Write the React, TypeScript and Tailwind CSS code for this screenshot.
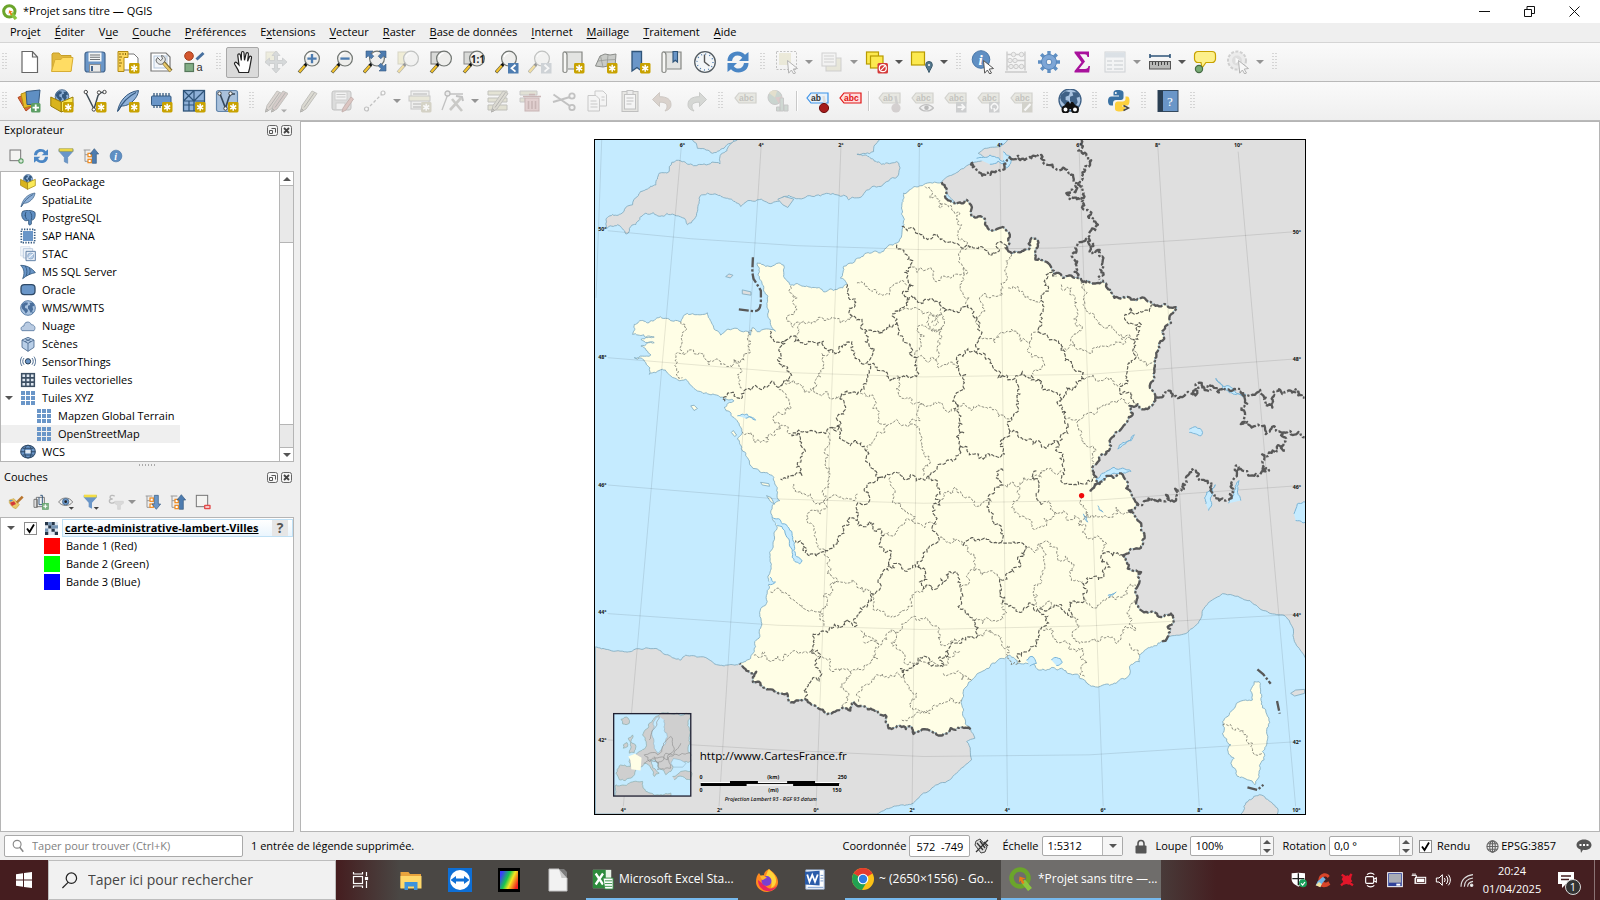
import React, { useState } from "react";
import type { ReactNode } from "react";

/* ------------------------------------------------------------------ */
/* Icon helpers                                                        */
/* ------------------------------------------------------------------ */

function Svg({ children, size = "size-6", box = "0 0 24 24" }: { children: ReactNode; size?: string; box?: string }) {
  return (
    <svg viewBox={box} className={`${size} shrink-0`} fill="none" aria-hidden="true">
      {children}
    </svg>
  );
}

function Star() {
  return (
    <g>
      <rect x="13" y="13" width="10.5" height="10.5" rx="1.4" fill="#c8a200" />
      <path d="M18.2 14.8v7M15.2 16.5l6 3.6M21.2 16.5l-6 3.6" stroke="#fff" strokeWidth="1.5" />
    </g>
  );
}

function Lens({ cx = 15, glass = "#eeeeec" }: { cx?: number; glass?: string }) {
  return (
    <g>
      <path d={`M${cx - 6.5} 15 L${cx - 13} 22.5`} stroke="#5b5b45" strokeWidth="3.4" />
      <path d={`M${cx - 7} 15.4 L${cx - 12.6} 22`} stroke="#f5c32c" strokeWidth="2" />
      <path d={`M${cx - 4.4} 12.5 L${cx - 7.2} 15.8`} stroke="#111" strokeWidth="3" />
      <circle cx={cx} cy="8.6" r="7.4" fill={glass} stroke="#6f7470" strokeWidth="1.2" />
      <path d={`M${cx - 5} 7a5.4 5.4 0 0 1 4.6-3.8`} stroke="#fff" strokeWidth="1.3" />
    </g>
  );
}

function Arrows() {
  return (
    <path
      d="M12 1l4 4.5h-2.5v5h5V8L23 12l-4.500 4v-2.500h-5v5H16L12 23l-4-4.500h2.500v-5h-5V16L1 12l4.500-4v2.500h5v-5H8z"
      fill="#a9b0b3"
      stroke="#8c9193"
      strokeWidth=".8"
    />
  );
}

function Cycle() {
  return (
    <g fill="#4a86c5">
      <path d="M1.500 11C1.500 5 6 1.500 11.500 1.500c3.500 0 6 1.300 7.500 3.200L22.500 2v9H13l3.300-3.200C15 6.200 13.600 5.500 11.800 5.500 8.500 5.500 6.500 7.500 6 11z" />
      <path d="M22.500 13c0 6-4.500 9.500-10 9.500-3.500 0-6-1.300-7.500-3.200L1.500 22v-9H11l-3.300 3.200c1.300 1.600 2.700 2.300 4.500 2.300 3.300 0 5.300-2 5.800-5.500z" />
    </g>
  );
}

function Globe({ cx = 12, cy = 12, r = 10, sea = "#b9cfe8", land = "#39597d" }: { cx?: number; cy?: number; r?: number; sea?: string; land?: string }) {
  return (
    <g transform={`translate(${cx} ${cy}) scale(${r / 10})`}>
      <circle r="10" fill={sea} stroke={land} strokeWidth="1.2" />
      <path
        d="M-8-5l4-3 4 1-1 3-3 1v3l3 1 1 3-3 4-2-4-3-3-1-3zM2-7l5 0 2 4-3 1 1 4-3 5-2-4-2-2 0-4 3-1zM5 5l2 0-1 2z"
        fill={land}
      />
    </g>
  );
}

function Tag({ fill = "#d3d3c4", stroke = "#9c9c90", text = "#77776c", label = "abc" }: { fill?: string; stroke?: string; text?: string; label?: string }) {
  return (
    <g>
      <path d="M6 4h17v10H6L2 9z" fill={fill} stroke={stroke} strokeWidth="1.200" />
      <text x="6" y="12" fontSize="8.500" fontWeight="700" fontFamily="Liberation Sans, sans-serif" fill={text}>
        {label}
      </text>
    </g>
  );
}

function Pencil({ color = "#b8b4a0" }: { color?: string }) {
  return (
    <g>
      <path d="M15 2l5 2.500L9 20l-5.500 3L5 16.500z" fill={color} stroke="#77756b" strokeWidth="1" />
      <path d="M17.500 3.500L7 18.500M4.500 19.500l-1 3.500 3-1.500z" stroke="#55534c" strokeWidth="1" />
    </g>
  );
}

const info = (
  <g>
    <circle cx="10" cy="9.500" r="8.800" fill="#5f8fc3" stroke="#4876a8" />
    <text x="7.500" y="15" fontSize="15" fontStyle="italic" fontWeight="700" fontFamily="Liberation Serif, serif" fill="#fff">
      i
    </text>
  </g>
);

const cursor = <path d="M12.500 10.500l10 8-4.300.6 2.300 3.900-1.800 1-2.300-4-2.700 3.200z" fill="#fff" stroke="#555" strokeWidth="1" />;

const mapSheet = (
  <g>
    <path d="M3 2h18v17H7" fill="#e3e4e2" stroke="#858783" strokeWidth="1.200" />
    <path d="M3 2c2.500 0 3 1.500 3 3v16c0 2-4 2-4 0V4c0-1 .3-2 1-2z" fill="#f7f7f5" stroke="#858783" strokeWidth="1.200" />
  </g>
);

const icons: Record<string, ReactNode> = {
  new: <path d="M5 1.500h10.500l5 5.500v15.500H5zM15.500 1.500V7h5" fill="#fff" stroke="#666" strokeWidth="1.200" />,
  open: (
    <g>
      <path d="M2 21V4l1-1h6l2 2.500h10V21z" fill="#e0b73c" stroke="#c79f28" />
      <path d="M1.500 21.500L5 9.500h6l1.500-2H23L21 21.500z" fill="#ffdc63" stroke="#d7ad33" />
    </g>
  ),
  save: (
    <g>
      <rect x="2" y="2" width="20" height="20" rx="2.500" fill="#6a96c8" stroke="#43658d" strokeWidth="1.200" />
      <rect x="5.500" y="2.500" width="13" height="9" fill="#f3f5f5" />
      <path d="M7 5h10M7 7.300h10M7 9.500h10" stroke="#6d7175" strokeWidth="1.100" />
      <rect x="6.500" y="14.500" width="11" height="7.500" fill="#e9eaea" stroke="#8a8f94" />
      <path d="M9 16v5" stroke="#43658d" strokeWidth="2" />
    </g>
  ),
  layout: (
    <g>
      <path d="M3 4h15l4 4v12H3z" fill="#fff" stroke="#777" />
      <path d="M2 1.500h10v6H8v14H2z" fill="#fbd55a" stroke="#b28a12" />
      <path d="M3 4h2M3 7h3M3 10h2M3 13h3M3 16h2M7 3v2M9.500 3v2" stroke="#8c6d10" />
      <Star />
    </g>
  ),
  manager: (
    <g>
      <path d="M2 3h15l4 4v14H2z" fill="#fff" stroke="#777" strokeWidth="1.200" />
      <rect x="5" y="6" width="13" height="12" fill="#f3f6fa" stroke="#b5c7dc" />
      <path d="M14 12l8 9" stroke="#7c6a2e" strokeWidth="4" />
      <path d="M14.500 13l7 8" stroke="#e9c96a" strokeWidth="2.200" />
      <path d="M8.500 7.500l3 3 2-1.500-1-3.500c3 .5 4.500 3 3.500 5.500l-2.500 3c-3 1-6-.5-6.500-4z" fill="#e4e6e5" stroke="#666" />
    </g>
  ),
  style: (
    <g>
      <circle cx="7" cy="6" r="4.300" fill="#d4572e" stroke="#a33e1c" />
      <path d="M14.500 9.500L21.500 3" stroke="#47709f" strokeWidth="3" />
      <rect x="3" y="13.500" width="8.500" height="8" fill="#82ad85" stroke="#55775a" strokeWidth="1.200" />
      <text x="14.500" y="20.500" fontSize="11" fontFamily="Liberation Sans, sans-serif" fill="#333">a</text>
    </g>
  ),
  hand: (
    <path
      d="M8 22.500c-.5-3-2.500-5-4.200-8-1-2 .7-3 2-1.800L8 15 6.800 5.500C6.600 3.500 9 3.200 9.300 5l1 5.500L10.500 3c0-2 2.400-2 2.500 0l.5 7.300L15 3.800c.4-1.800 2.600-1.300 2.400.5l-.8 7 1.700-4.200c.7-1.600 2.600-.9 2.200.8-.9 4-1 8-3 14.600z"
      fill="#fff"
      stroke="#222"
      strokeWidth="1.200"
    />
  ),
  panSel: (
    <g>
      <rect x="2" y="2" width="11" height="11" fill="#e2dfba" stroke="#b8b59b" />
      <Arrows />
    </g>
  ),
  zin: (
    <g>
      <Lens />
      <path d="M15 4v9.200M10.400 8.600h9.200" stroke="#4d7cb0" strokeWidth="2.300" />
    </g>
  ),
  zout: (
    <g>
      <Lens />
      <path d="M10.400 8.600h9.200" stroke="#4d7cb0" strokeWidth="2.300" />
    </g>
  ),
  zfull: (
    <g>
      <Lens cx={14} />
      <path d="M3 1h7L7.800 3.200l3 3-2.600 2.600-3-3L3 8zM23 1v7l-2.200-2.200-3 3-2.600-2.600 3-3L16 1zM23 21h-7l2.200-2.200-3-3 2.600-2.600 3 3L23 14z" fill="#4d7cb0" stroke="#35597f" strokeWidth=".6" />
    </g>
  ),
  zsel: (
    <g>
      <rect x="2" y="2" width="12" height="12" fill="#e6dfa7" stroke="#a9a580" />
      <Lens />
    </g>
  ),
  zlayer: (
    <g>
      <rect x="2" y="2" width="12" height="12" fill="#d9dad8" stroke="#777" />
      <Lens />
    </g>
  ),
  znative: (
    <g>
      <rect x="2" y="2" width="12" height="12" fill="#d9dad8" stroke="#888" />
      <Lens />
      <text x="8.800" y="12.500" fontSize="10" fontWeight="700" fontFamily="Open Sans, sans-serif" fill="#222">1:1</text>
    </g>
  ),
  zlast: (
    <g>
      <Lens cx={14} />
      <rect x="13" y="13" width="10.500" height="10.500" fill="#4d7cb0" />
      <path d="M20.500 14.800l-4 3.400 4 3.400" stroke="#fff" strokeWidth="1.800" />
    </g>
  ),
  znext: (
    <g>
      <Lens cx={14} />
      <rect x="13" y="13" width="10.500" height="10.500" fill="#9aa4ad" />
      <path d="M16.500 14.800l4 3.400-4 3.400" stroke="#fff" strokeWidth="1.800" />
    </g>
  ),
  newMap: <g>{mapSheet}<Star /></g>,
  new3d: (
    <g>
      <path d="M1.500 16L6 6l5-2 5 1 6-1-1 13-7-1-5 1z" fill="#c9cbc8" stroke="#8a8c89" />
      <path d="M4 11l8-1 10-.5M6.500 6L9 17M14 5l-1 11" stroke="#979996" strokeWidth=".8" />
      <Star />
    </g>
  ),
  newBook: (
    <g>
      <path d="M5 1.500h9.500V21L10 17.500 5 21z" fill="#6a96c8" stroke="#2f5479" strokeWidth="1.300" />
      <Star />
    </g>
  ),
  books: (
    <g>
      {mapSheet}
      <path d="M13 1.500h4.500V12l-2.200-1.800L13 12z" fill="#6a96c8" stroke="#2f5479" strokeWidth="1.100" />
    </g>
  ),
  clock: (
    <g>
      <circle cx="12" cy="12" r="10.300" fill="#f3f6f8" stroke="#555d63" strokeWidth="1.300" />
      <circle cx="12" cy="12" r="8" stroke="#4d7cb0" strokeWidth="1.300" strokeDasharray="1 3.190" />
      <path d="M11.500 4.500V12l5 4" stroke="#555" strokeWidth="1.400" />
    </g>
  ),
  refresh: <Cycle />,
  select: (
    <g>
      <rect x="1.500" y="1.500" width="20" height="18" stroke="#777" strokeDasharray="2 1.500" />
      <rect x="4" y="3" width="12" height="12" fill="#dcd8b0" />
      {cursor}
    </g>
  ),
  selForm: (
    <g>
      <rect x="6" y="8" width="15" height="13" fill="#d6d4b4" stroke="#999" />
      <rect x="2" y="3" width="14" height="13" fill="#f1f1f0" stroke="#999" />
      <path d="M4 6h10M4 9h10M4 12h10" stroke="#999" />
    </g>
  ),
  desel: (
    <g>
      <rect x="1.500" y="2" width="12" height="12" fill="#fce94f" stroke="#b89b00" strokeWidth="1.200" />
      <rect x="5.500" y="6" width="12.500" height="12" fill="#fce94f" stroke="#b89b00" strokeWidth="1.200" />
      <rect x="12.500" y="13" width="10.500" height="10.500" rx="1.500" fill="#d43a3a" />
      <circle cx="17.800" cy="18.200" r="3.500" stroke="#fff" strokeWidth="1.200" />
      <path d="M15.500 20.600l4.600-4.800" stroke="#fff" strokeWidth="1.200" />
    </g>
  ),
  selPin: (
    <g>
      <rect x="1.500" y="2" width="13" height="13" fill="#fce94f" stroke="#b89b00" strokeWidth="1.200" />
      <path d="M19 11.500a3.300 3.300 0 0 1 3.300 3.400c0 2.400-2.300 4.500-3.300 7.600-1-3.100-3.300-5.200-3.300-7.600a3.300 3.300 0 0 1 3.300-3.400z" fill="#55798f" stroke="#3c5a6c" />
      <circle cx="19" cy="15" r="1" fill="#fff" />
    </g>
  ),
  identify: <g>{info}{cursor}</g>,
  abacus: (
    <g stroke="#909090">
      <path d="M3 1.500v19M21 1.500v19M1 22h22M3 4.500h18M3 10.500h18M3 16.500h18" strokeWidth="1.400" />
      <g fill="#e0e0df">
        <circle cx="9.500" cy="4.500" r="2.200" /><circle cx="17.500" cy="4.500" r="2.200" />
        <circle cx="6" cy="10.500" r="2.200" /><circle cx="11" cy="10.500" r="2.200" />
        <circle cx="7" cy="16.500" r="2.200" /><circle cx="12" cy="16.500" r="2.200" /><circle cx="17.500" cy="16.500" r="2.200" />
      </g>
    </g>
  ),
  gear: (
    <g>
      <path d="M12 1v22M1 12h22M4.200 4.200l15.600 15.600M19.800 4.200L4.200 19.800" stroke="#5f8fc3" strokeWidth="3.400" />
      <circle cx="12" cy="12" r="7.500" fill="#7ea6d6" stroke="#5686bb" />
      <circle cx="12" cy="12" r="2.800" fill="#f4f4f4" stroke="#5686bb" />
    </g>
  ),
  sigma: <path d="M4.500 1.500h14.500v5.500h-1.500c-.5-2-1-2.700-3-2.700H9.800L15 11.500 9 19h6c2 0 3-.8 3.500-3H20l-.8 6.500H4.500V21l7-8.700L4.500 3z" fill="#a8119c" />,
  table: (
    <g>
      <rect x="2" y="2" width="20" height="20" fill="#f2f4f6" stroke="#99a1a8" />
      <path d="M2 5h20" stroke="#b3c1ce" strokeWidth="5" />
      <path d="M4 11h5M11 11h9M4 15h5M11 15h9M4 19h5M11 19h9" stroke="#aab2b9" strokeWidth="1.400" />
    </g>
  ),
  measure: (
    <g>
      <path d="M2 6h20M2 4v4M22 4v4" stroke="#2f5479" strokeWidth="1.600" />
      <rect x="1.500" y="11.500" width="21" height="7.500" fill="#b9bab8" stroke="#555" />
      <path d="M4.500 12v3M7.500 12v3M10.500 12v4M13.500 12v3M16.500 12v3M19.500 12v3" stroke="#444" />
    </g>
  ),
  tip: (
    <g>
      <path d="M5 1.500h14a3.500 3.500 0 0 1 3.500 3.500v4a3.500 3.500 0 0 1-3.500 3.500h-6l-4 5.500-1-5.500H5A3.500 3.500 0 0 1 1.500 9V5A3.500 3.500 0 0 1 5 1.500z" fill="#fdf08a" stroke="#c8a200" strokeWidth="1.200" />
      <circle cx="6" cy="19" r="3.600" fill="#78ab74" stroke="#466b45" strokeWidth="1.200" />
    </g>
  ),
  action: (
    <g>
      <circle cx="11" cy="10.500" r="9" fill="#dedede" stroke="#999" strokeWidth="2" strokeDasharray="3 1.500" />
      <circle cx="11" cy="10.500" r="5" fill="#bbb" />
      <path d="M9.500 7.500l4.500 3-4.500 3z" fill="#fff" />
      {cursor}
    </g>
  ),
  layers: (
    <g>
      <path d="M1 8.500l7-3.500 7 12-6 5z" fill="#d9673b" stroke="#b2481f" />
      <path d="M4 5l7-2.500 5 14-9 2.500z" fill="#e3b92c" stroke="#b48d0f" />
      <path d="M9 2.500l14-1.500-1.500 14.500H10z" fill="#5f8fc3" stroke="#35597f" />
      <rect x="14" y="14" width="9.500" height="9.500" rx="1.500" fill="#5c9e64" />
      <path d="M18.700 15.500v6.500M15.500 18.700H22" stroke="#fff" strokeWidth="1.800" />
    </g>
  ),
  gpkg: (
    <g>
      <Globe cx={12} cy={7.500} r={6.800} sea="#8fb1d8" land="#35597f" />
      <path d="M.8 8l10.500 5v10L.8 17z" fill="#d9b41c" stroke="#9b7d05" />
      <path d="M11.300 13L23 8v9.500L11.300 23z" fill="#fbea58" stroke="#9b7d05" />
    </g>
  ),
  newGpkg: (
    <g>
      <Globe cx={12} cy={7.500} r={6.800} sea="#8fb1d8" land="#35597f" />
      <path d="M.8 8l10.500 5v10L.8 17z" fill="#d9b41c" stroke="#9b7d05" />
      <path d="M11.300 13L23 8v9.500L11.300 23z" fill="#fbea58" stroke="#9b7d05" />
      <Star />
    </g>
  ),
  shape: (
    <g>
      <path d="M3 4l8 16 4-13.500L17.500 3.500H21" stroke="#3f4c56" strokeWidth="1.500" />
      <g fill="#fff" stroke="#444"><circle cx="2.800" cy="3" r="1.700" /><circle cx="16" cy="3.500" r="1.700" /><circle cx="21.500" cy="3" r="1.700" /><circle cx="10.800" cy="20.500" r="1.700" /></g>
      <Star />
    </g>
  ),
  feather: (
    <g>
      <path d="M1.500 22.500C3 13 10 3 22.500 1.500 22 6 20 9 17 12c-4 4-8 5-11.500 5z" fill="#8fb1d8" stroke="#35597f" />
      <path d="M2 22C6 14 12 7.500 20 3.500" stroke="#35597f" strokeWidth="1.100" />
    </g>
  ),
  newFeather: (
    <g>
      <path d="M1.500 22.500C3 13 10 3 22.500 1.500 22 6 20 9 17 12c-4 4-8 5-11.500 5z" fill="#8fb1d8" stroke="#35597f" />
      <path d="M2 22C6 14 12 7.500 20 3.500" stroke="#35597f" strokeWidth="1.100" />
      <Star />
    </g>
  ),
  chip: (
    <g>
      <path d="M5 4v15M8 4v15M11 4v15M14 4v15M17 4v15M20 4v15" stroke="#35597f" strokeWidth="1.300" />
      <rect x="2.500" y="7" width="19.500" height="9.500" rx="1" fill="#6a96c8" stroke="#35597f" />
      <Star />
    </g>
  ),
  mesh: (
    <g>
      <rect x="1.500" y="1.500" width="21" height="20.500" fill="#8fb1d8" stroke="#2f5479" strokeWidth="1.300" />
      <path d="M1.500 12h21M12 1.500V22M1.500 1.500L12 12M12 1.500L1.500 12M12 12L22.500 1.500M1.500 16H12M7 12v10" stroke="#2f5479" strokeWidth="1.200" />
      <Star />
    </g>
  ),
  virtual: (
    <g>
      <rect x="1.500" y="1.500" width="21" height="21" rx="2" fill="#a9c1dc" stroke="#6285ab" strokeWidth="1.200" />
      <path d="M5 5l5.500 14L14 8l2-3h4" stroke="#35485c" strokeWidth="1.600" />
      <g fill="#fff" stroke="#444"><circle cx="4.500" cy="4.500" r="1.700" /><circle cx="15.500" cy="4.500" r="1.700" /><circle cx="10.500" cy="19.500" r="1.700" /></g>
      <Star />
    </g>
  ),
  edits: (
    <g>
      <g transform="translate(-2 0)"><Pencil color="#b5a59b" /></g>
      <g transform="translate(4 0)"><Pencil color="#a98f8a" /></g>
      <path d="M17 20.500h6l-3 3z" fill="#444" />
    </g>
  ),
  pencil: <Pencil />,
  saveEdits: (
    <g>
      <rect x="2" y="2" width="19" height="19" rx="2" fill="#b9bab9" stroke="#777" />
      <rect x="5" y="3" width="12" height="8" fill="#eee" stroke="#999" />
      <path d="M6.500 5.500h9M6.500 8h9" stroke="#888" />
      <rect x="6" y="14" width="9" height="6.500" fill="#eee" stroke="#999" />
      <path d="M21 8l2.500 2L16 21l-4 2 1-4z" fill="#ba8278" stroke="#84564f" />
    </g>
  ),
  line: (
    <g>
      <path d="M3.500 20.500l17-17" stroke="#777" strokeWidth="1.300" strokeDasharray="3 2" />
      <g fill="#fff" stroke="#777" strokeWidth="1.200"><circle cx="3.500" cy="20" r="2" /><circle cx="20" cy="4" r="2" /></g>
    </g>
  ),
  addRow: (
    <g>
      <rect x="3" y="2" width="18" height="18" fill="#e8e8e6" stroke="#888" />
      <rect x="1" y="7" width="21" height="5" fill="#d6d3b0" stroke="#888" />
      <path d="M5 5h14M5 15h8M5 18h8" stroke="#888" strokeWidth="1.300" />
      <rect x="13" y="13" width="10.500" height="10.500" rx="1.400" fill="#a8a284" />
      <path d="M18.200 14.800v7M15.200 16.500l6 3.600M21.200 16.500l-6 3.600" stroke="#fff" strokeWidth="1.500" />
    </g>
  ),
  vertex: (
    <g>
      <path d="M1 21L7 5h15" stroke="#777" strokeWidth="1.300" />
      <circle cx="6.500" cy="4.500" r="2.500" fill="#ddd" stroke="#666" strokeWidth="1.300" />
      <path d="M9 21L20 9M11 10l10 12" stroke="#8e8d86" strokeWidth="2.600" />
      <path d="M15 7l6 1 1 4" stroke="#777" strokeWidth="2" />
    </g>
  ),
  multi: (
    <g>
      <path d="M2 2h19v4H2zM2 9h19v4H2zM2 16h19v5H2z" fill="#c9c7a3" stroke="#77776b" />
      <g transform="translate(2 0)"><Pencil /></g>
    </g>
  ),
  trash: (
    <g>
      <path d="M1 2h17v4H1zM1 9h5v4H1z" fill="#c4c2a4" stroke="#888" />
      <rect x="6" y="9" width="14" height="13" fill="#c69a9a" stroke="#8b5a5a" />
      <path d="M4 7.500h18M10 5.500h6M9.500 12v8M13 12v8M16.500 12v8" stroke="#8b5a5a" strokeWidth="1.600" />
    </g>
  ),
  cut: (
    <g stroke="#777">
      <path d="M1.500 5.500L18 17M1 13l17-5" strokeWidth="2" />
      <circle cx="20" cy="18.500" r="2.700" strokeWidth="1.800" />
      <circle cx="20" cy="7" r="2.700" strokeWidth="1.800" />
    </g>
  ),
  copy: (
    <g fill="#f4f4f4" stroke="#888">
      <path d="M10 2h8l3.500 3.500V17H10z" />
      <path d="M3 6.500h8l3.500 3.500v12H3z" />
      <path d="M5.500 12h6M5.500 15h7M5.500 18h7M16.500 8h3M16.500 11h3" />
    </g>
  ),
  paste: (
    <g stroke="#777">
      <rect x="4" y="2.500" width="16" height="20" fill="#d2d1c8" />
      <rect x="6.500" y="5.500" width="11" height="14.500" fill="#f7f7f7" />
      <rect x="9" y="1.500" width="6" height="4" fill="#ddd" />
      <path d="M8.500 9h7M8.500 12h7M8.500 15h5" />
    </g>
  ),
  undo: <path d="M8.500 3.500v4.200c7 0 11.500 2.300 11.500 8 0 3-2 5.300-6 6.300 1.500-2 2-3.200 2-4.800 0-2.800-2.500-4-7.500-4v4.300L1.500 10.500z" fill="#b3a092" stroke="#94877c" />,
  redo: <path d="M15.500 3.500v4.200C8.500 7.700 4 10 4 15.700c0 3 2 5.300 6 6.300-1.500-2-2-3.200-2-4.800 0-2.800 2.500-4 7.500-4v4.300l7-7z" fill="#a9ada6" stroke="#878b85" />,
  label: <Tag />,
  diagram: (
    <g>
      <circle cx="9" cy="8.500" r="7" fill="#8ca69a" stroke="#888" />
      <path d="M9 8.500L3 4a7 7 0 0 1 8-2z" fill="#c7bd8f" />
      <path d="M9 8.500l4 6a7 7 0 0 0 3-7z" fill="#b98c8c" />
      <path d="M14 9h3.500v13H14zM18 16h4v6h-4zM10.500 18H14v4h-3.500z" fill="#9bb0a3" stroke="#888" />
    </g>
  ),
  labPin: (
    <g>
      <Tag fill="#e6f1fb" stroke="#3d93e8" text="#333" label="ab" />
      <path d="M18.500 7l1.500 9" stroke="#ddd" strokeWidth="2.500" />
      <circle cx="19" cy="19" r="4.600" fill="#a61c1c" stroke="#6d1010" />
    </g>
  ),
  labRed: <Tag fill="#ffdede" stroke="#e01414" text="#e01414" />,
  labOff: (
    <g>
      <Tag label="ab" />
      <path d="M18.500 7l1.500 9" stroke="#999" strokeWidth="2.500" />
      <circle cx="19" cy="19" r="4.600" fill="#a79d9d" />
    </g>
  ),
  labEye: (
    <g>
      <Tag />
      <path d="M9.500 19c3.500-4.500 10-4.500 14 0-4 4-10.500 4-14 0z" fill="#eee" stroke="#777" strokeWidth="1.200" />
      <circle cx="16.500" cy="18.700" r="2.300" fill="#666" />
    </g>
  ),
  labMove: (
    <g>
      <Tag />
      <rect x="13" y="13" width="10.500" height="10.500" fill="#989b9d" />
      <path d="M14.500 18.200h7M18.500 15.200l3 3-3 3" stroke="#fff" strokeWidth="1.800" />
    </g>
  ),
  labRot: (
    <g>
      <Tag />
      <rect x="13" y="13" width="10.500" height="10.500" fill="#989b9d" />
      <path d="M16 20a3.200 3.200 0 1 1 4.500.5M18 19l.5 3 2.800-1.800" stroke="#fff" strokeWidth="1.500" />
    </g>
  ),
  labEdit: (
    <g>
      <Tag />
      <rect x="13" y="13" width="10.500" height="10.500" fill="#a3a191" />
      <path d="M15.500 21.500l6-6.500" stroke="#fff" strokeWidth="2.200" />
    </g>
  ),
  search: (
    <g>
      <Globe cx={12} cy={11} r={11} sea="#a9c3e0" land="#3f6186" />
      <path d="M9 13h2l1 2 1-2h2l5 7H4z" fill="#111" />
      <g fill="#fff" stroke="#111" strokeWidth="2"><circle cx="7.500" cy="20.500" r="3" /><circle cx="17" cy="20.500" r="3" /></g>
    </g>
  ),
  python: (
    <g>
      <path d="M11 1C7 1 6.500 2.500 6.500 4v2.500H12v1H4.500C2 7.500 1 9.500 1 12s1 4.500 3 4.500h2V14c0-2 1.500-3 3-3h5c1.500 0 2.500-1.200 2.500-2.500V4c0-2-1.500-3-5.500-3z" fill="#3a72a4" />
      <path d="M13 22.500c-4 0-5-1.300-5-3v-4c0-2 1.300-3 2.800-3h5c1.700 0 2.700-1 2.700-2.700V7.500h1.500c2 0 2.500 2 2.500 4.500s-1 4.500-2.500 4.500h-5v1h3v2c0 2-1.500 3-5 3z" fill="#fdd03e" />
      <circle cx="8.800" cy="3.900" r="1" fill="#fff" />
      <path d="M16.500 16.500l5 2.500-5 2.500" stroke="#444" strokeWidth="1.400" />
    </g>
  ),
  help: (
    <g>
      <rect x="2" y="1.500" width="20" height="21" fill="#6a96c8" stroke="#34495e" />
      <rect x="2" y="1.500" width="5" height="21" fill="#2b3f53" />
      <text x="11" y="16.500" fontSize="13" fontFamily="Liberation Serif, serif" fill="#fff">?</text>
    </g>
  ),
  /* panel icons */
  addSel: (
    <g>
      <rect x="3" y="3" width="16" height="16" fill="#f4f4f2" stroke="#777" strokeWidth="1.500" />
      <circle cx="19.500" cy="19.500" r="4" fill="#5c9e64" />
      <path d="M19.500 17v5M17 19.500h5" stroke="#fff" strokeWidth="1.500" />
    </g>
  ),
  filter: (
    <g>
      <path d="M1.500 2h21v3L14.500 14v9l-5-2.500V14L1.500 5z" fill="#6a96c8" stroke="#5a86b8" />
      <path d="M2 3h20" stroke="#f3dd46" strokeWidth="4" />
      <path d="M1.500 1h21v4h-21z" stroke="#98953b" strokeWidth=".8" />
    </g>
  ),
  collapse: (
    <g>
      <path d="M3 3v17h5M3 10h5M1 3h10" stroke="#999" strokeWidth="1.500" />
      <rect x="7.500" y="8" width="5" height="5" fill="#fff" stroke="#f08a1d" strokeWidth="1.800" />
      <rect x="7.500" y="17" width="5" height="5" fill="#fff" stroke="#f08a1d" strokeWidth="1.800" />
      <path d="M17 1l6.500 8H20v14h-6V9h-3.500z" fill="#4d7cb0" stroke="#35597f" />
    </g>
  ),
  expand: (
    <g>
      <path d="M3 3v17h5M3 10h5M1 3h10" stroke="#999" strokeWidth="1.500" />
      <rect x="7.500" y="6" width="5" height="5" fill="#fff" stroke="#f08a1d" strokeWidth="1.800" />
      <rect x="7.500" y="15" width="5" height="5" fill="#fff" stroke="#f08a1d" strokeWidth="1.800" />
      <path d="M17 23l6.500-8H20V2h-6v13h-3.500z" fill="#6a96c8" stroke="#35597f" />
    </g>
  ),
  infoOnly: <g transform="translate(2 2.500)">{info}</g>,
  brush: (
    <g>
      <path d="M2 9l7-2 8 9-5 6C7 21 4 17 2 13z" fill="#e9c96a" stroke="#c6a54a" />
      <path d="M2 9l6 0-4 3z" fill="#5f8fc3" /><path d="M3 13l6-2 3 4-6 3z" fill="#d43a3a" />
      <path d="M13 13l9-9" stroke="#b9762f" strokeWidth="4" />
    </g>
  ),
  group: (
    <g stroke="#666">
      <path d="M1.500 8h5v12h-5zM5 5h12v14H5z" fill="#f3f3f3" strokeWidth="1.300" />
      <path d="M9 5V16h5V2h-3" stroke="#35597f" strokeWidth="1.500" />
      <rect x="14" y="14" width="9" height="9" fill="#7db184" stroke="#5c9e64" />
      <path d="M18.500 15.500v6M15.500 18.500h6" stroke="#fff" strokeWidth="1.600" />
    </g>
  ),
  eye: (
    <g>
      <path d="M1 12c5-8 16-8 21 0-5 7-16 7-21 0z" fill="#eee" stroke="#777" strokeWidth="1.400" />
      <circle cx="11.500" cy="11.500" r="4.800" fill="#6a96c8" stroke="#35597f" />
      <circle cx="11.500" cy="11.500" r="2" fill="#222" />
      <path d="M16 19.500h8l-4 4z" fill="#444" />
    </g>
  ),
  filterDrop: (
    <g>
      <path d="M1 2h20v3L13.500 13v9l-5-2.500V13L1 5z" fill="#6a96c8" />
      <path d="M1.500 3h19" stroke="#f3dd46" strokeWidth="4" />
      <path d="M16 19.500h8l-4 4z" fill="#444" />
    </g>
  ),
  epsilon: (
    <g>
      <path d="M10 3.500C7.500 1 3 2 3 5c0 2 2 2.500 4 2.500-3 0-5 1-5 3.200 0 3.300 5.500 4 8 1.300" stroke="#999" strokeWidth="2" />
      <path d="M10 11h13v3l-4.500 3v6h-4v-6L10 14z" fill="#ccc" stroke="#bbb" />
    </g>
  ),
  removeLay: (
    <g>
      <rect x="2" y="2" width="17" height="17" fill="#f4f4f2" stroke="#777" strokeWidth="1.500" />
      <rect x="13.500" y="16" width="10" height="7" rx="1.500" fill="#e34b4b" />
      <path d="M15.500 19.500h6" stroke="#fff" strokeWidth="2" />
    </g>
  ),
  /* tree icons */
  elephant: (
    <g>
      <path d="M4 2c4-2 14-2 18 1 2 4 0 11-3 12l-2-1v7c-1 2-4 2-4 0v-6l-3 1C5 17 0 8 4 2z" fill="#5f8fc3" stroke="#2f5479" strokeWidth="1.300" />
      <path d="M9 3c-2 4-1 8 1 11M15 3c3 3 3 7 2 11M7 8h2" stroke="#2f5479" strokeWidth="1.300" />
    </g>
  ),
  hana: (
    <g>
      <rect x="2" y="2" width="20" height="20" stroke="#35597f" strokeWidth="2.500" strokeDasharray="2 2" />
      <rect x="4.500" y="4.500" width="15" height="15" fill="#6a96c8" />
    </g>
  ),
  stac: (
    <g>
      <path d="M1 1h14v14H1z" fill="#f4f7fb" stroke="#cdd9e8" />
      <path d="M5 4h14v14H5z" fill="#eef3f9" stroke="#a3b8d2" />
      <path d="M9 8h14v14H9z" fill="#e6edf6" stroke="#5a7ba1" strokeWidth="1.400" />
      <circle cx="16" cy="15" r="4.500" fill="#b9cfe8" stroke="#7d9cc0" />
      <path d="M12.500 18l7-6" stroke="#fff" strokeWidth="1.500" />
    </g>
  ),
  mssql: (
    <g>
      <path d="M1 2c9 0 17 4 22 11-6 1-13 4-19 9 3-7 3-14-3-20z" fill="#6a96c8" stroke="#2f5479" strokeWidth="1.200" />
      <path d="M8 3c3 5 3 11 1 15M14 6c2 4 1 7 0 10" stroke="#2f5479" strokeWidth="1.200" />
    </g>
  ),
  oracle: <rect x="1.500" y="4" width="21" height="15" rx="5" fill="#6a96c8" stroke="#2f4a68" strokeWidth="2" />,
  wms: <Globe r={11} sea="#a9c3e0" land="#4a6f9c" />,
  cloud: <path d="M3 19c-3-3-1-7 3-7 0-7 9-8 11-2 5 0 7 5 4 9z" fill="#b9cbe2" stroke="#5a7ba1" strokeWidth="1.300" />,
  cube: (
    <g stroke="#4a6a8f" strokeWidth="1.300">
      <path d="M12 2l9 4v11l-9 6-9-6V6z" fill="#b9cfe8" />
      <path d="M3 6l9 5 9-5M12 11v12M7.500 4l9 4.500M16.500 4l-9 4.500" />
    </g>
  ),
  sensor: (
    <g stroke="#4a6a8f" strokeWidth="1.500">
      <circle cx="12" cy="11" r="4" fill="#6a96c8" stroke="#2b3f53" />
      <path d="M6 6c-2.500 3-2.500 7 0 10M18 6c2.500 3 2.500 7 0 10M3 4c-3 4-3 10 0 14M21 4c3 4 3 10 0 14" />
    </g>
  ),
  vtiles: (
    <g stroke="#3c4f63" strokeWidth="2.300">
      <rect x="2.500" y="2.500" width="19" height="19" fill="#dde6f0" />
      <path d="M8.800 2v20M15.200 2v20M2 8.800h20M2 15.200h20" />
    </g>
  ),
  xyz: <path d="M1.500 1.500h6v6h-6zM9 1.500h6v6H9zM16.500 1.500h6v6h-6zM1.500 9h6v6h-6zM9 9h6v6H9zM16.500 9h6v6h-6zM1.500 16.500h6v6h-6zM9 16.500h6v6H9zM16.500 16.500h6v6h-6z" fill="#6a96c8" />,
  wcs: (
    <g stroke="#2f4a68" strokeWidth="1.600">
      <ellipse cx="12" cy="11.500" rx="11" ry="9.500" fill="#6a96c8" />
      <ellipse cx="12" cy="11.500" rx="5" ry="9.500" />
      <path d="M1.500 11.500h21M4 6.500h16M4 16.500h16" />
      <path d="M8 9h8v5H8z" fill="#dfe8f2" stroke="none" />
    </g>
  ),
};

/* ------------------------------------------------------------------ */
/* Toolbars                                                            */
/* ------------------------------------------------------------------ */

function Grip() {
  return (
    <span className="flex w-4 shrink-0 justify-center">
      <svg width="5" height="18" aria-hidden="true">
        <path d="M1 0v18M4 0v18" stroke="#b5b5b5" strokeWidth="1" strokeDasharray="1 2" />
      </svg>
    </span>
  );
}

type Tool = string | [string, "drop" | "on"];

/* A leading "-" marks a disabled tool, a trailing arrow comes from "drop". */
function ToolRow({ items, name }: { items: Tool[]; name: string }) {
  return (
    <div role="toolbar" aria-label={name} className="flex h-[39px] shrink-0 items-center overflow-hidden border-b border-[#b9b9b9] bg-linear-to-b from-[#fafafa] to-[#efefef]">
      <span className="-ml-1 flex">
        <Grip />
      </span>
      {items.map((t, i) => {
        const id = typeof t === "string" ? t : t[0];
        const mode = typeof t === "string" ? "" : t[1];
        if (id === "|") return <Grip key={i} />;
        if (id === "/") return <span key={i} className="mx-0.5 h-5 w-0.5 border-l border-[#c9c9c9] bg-white" />;
        const off = id.startsWith("-");
        const key = off ? id.slice(1) : id;
        return (
          <React.Fragment key={i}>
            <button
              type="button"
              disabled={off}
              aria-label={key}
              className={`flex h-[31px] w-[33px] shrink-0 items-center justify-center ${mode === "on" ? "rounded-xs border border-[#a8a8a8] bg-[#dadada]" : ""} ${off ? "opacity-40" : ""}`}
            >
              <Svg>{icons[key]}</Svg>
            </button>
            {mode === "drop" && (
              <button type="button" disabled={off} aria-label={`${key} menu`} className={`flex w-3 shrink-0 justify-center ${off ? "opacity-60" : ""}`}>
                <svg width="8" height="4" aria-hidden="true">
                  <path d="M0 0h8L4 4z" fill="#555" />
                </svg>
              </button>
            )}
          </React.Fragment>
        );
      })}
      <Grip />
    </div>
  );
}

const row1: Tool[] = [
  "new", "open", "save", "layout", "manager", "style", "|",
  ["hand", "on"], "-panSel", "zin", "zout", "zfull", "-zsel", "zlayer", "znative", "zlast", "-znext",
  "newMap", "new3d", "newBook", "books", "clock", "refresh", "|",
  ["-select", "drop"], ["-selForm", "drop"], ["desel", "drop"], ["selPin", "drop"], "|",
  "identify", "-abacus", "gear", "sigma", ["-table", "drop"], ["measure", "drop"], "tip", ["-action", "drop"],
];

const row2: Tool[] = [
  "layers", "newGpkg", "shape", "newFeather", "chip", "mesh", "virtual", "|",
  "-edits", "-pencil", "-saveEdits", ["-line", "drop"], "-addRow", ["-vertex", "drop"], "-multi", "-trash", "-cut", "-copy", "-paste", "-undo", "-redo", "|",
  "-label", "-diagram", "/", "labPin", "labRed", "/", "-labOff", "-labEye", "-labMove", "-labRot", "-labEdit", "|",
  "search", "|", "python", "|", "help",
];

const menus: [string, string, string][] = [
  ["Pro", "j", "et"], ["", "É", "diter"], ["V", "u", "e"], ["", "C", "ouche"], ["", "P", "références"], ["E", "x", "tensions"],
  ["", "V", "ecteur"], ["", "R", "aster"], ["", "B", "ase de données"], ["", "I", "nternet"], ["", "M", "aillage"],
  ["", "T", "raitement"], ["", "A", "ide"],
];

/* ------------------------------------------------------------------ */
/* Map                                                                 */
/* ------------------------------------------------------------------ */

type Pt = [number, number];

function parse(s: string): Pt[] {
  return s.trim().split(/\s+/).map((p) => p.split(",").map(Number) as Pt);
}

function noise(x: number, y: number) {
  const v = Math.sin(Math.round(x) * 12.9898 + Math.round(y) * 78.233) * 43758.5453;
  return (v - Math.floor(v)) * 2 - 1;
}

/* Midpoint displacement: gives coasts and borders a natural, ragged run. */
function rough(s: string, amp = 0.2, min = 8): string {
  const pts = parse(s);
  const out: Pt[] = [pts[0]];
  const split = (a: Pt, b: Pt) => {
    const dx = b[0] - a[0];
    const dy = b[1] - a[1];
    const len = Math.hypot(dx, dy);
    if (len < min) {
      out.push(b);
      return;
    }
    const mx = (a[0] + b[0]) / 2;
    const my = (a[1] + b[1]) / 2;
    const k = noise(mx, my) * (len > 60 ? amp * 0.5 : amp);
    const m: Pt = [mx - dy * k, my + dx * k];
    split(a, m);
    split(m, b);
  };
  for (let i = 1; i < pts.length; i++) split(pts[i - 1], pts[i]);
  return "M" + out.map((p) => `${p[0].toFixed(1)} ${p[1].toFixed(1)}`).join("L");
}

const belgium =
  "1055,152 1065,195 1095,218 1130,205 1145,255 1185,262 1195,292 1245,290 1260,310 1253,355 1290,363 1320,350 1322,325 1340,322 1337,385 1380,400 1420,440 1460,438 1480,452 1540,448 1575,500 1610,497 1640,510 1665,500 1690,517 1730,520 1763,530 1745,575 1717,605 1710,650 1695,695 1695,740 1690,780 1698,800 1680,828 1650,830 1645,820 1620,825 1630,848 1595,895 1560,930 1558,960 1520,1000 1515,1035 1520,1060 1503,1080 1530,1060 1545,1040 1595,1028 1610,1050 1625,1090 1645,1120 1618,1140 1645,1170 1665,1215 1660,1245 1600,1275 1615,1315 1655,1325 1650,1355 1638,1385 1640,1420 1670,1445 1710,1460 1745,1450 1753,1465 1735,1490 1735,1520 1715,1535";
const southCoast =
  "1715,1535 1685,1550 1655,1570 1650,1595 1620,1610 1620,1635 1580,1660 1540,1665 1510,1668 1485,1650 1435,1630 1420,1617 1350,1620 1320,1600 1285,1600 1260,1575 1225,1590 1185,1620 1145,1650 1120,1685 1120,1760 1142,1798";
const pyrenees =
  "1142,1798 1110,1792 1060,1812 1045,1817 1000,1798 970,1812 965,1790 930,1788 895,1795 885,1755 850,1740 790,1715 780,1742 690,1738 650,1710 610,1718 590,1690 540,1678 505,1655 490,1660 497,1625 465,1617 448,1600";
const atlantic =
  "448,1600 480,1585 495,1550 512,1475 530,1390 540,1320 548,1250 560,1190 545,1160 550,1120 568,1110 560,1090 560,1070 550,1040 520,1025 500,1015 470,980 440,925 455,905 440,870 430,860 400,830 430,810 400,800 355,790 320,780 285,745 240,735 215,715 195,725 175,730 165,695 130,680 180,672 150,645 190,635 150,625 190,618 125,610 130,580 190,568 230,562 270,572 290,547 350,545 365,580 390,612 440,592 465,600 480,612 485,590 500,602 555,600 540,580 532,495 515,460 500,395 535,405 580,402 580,430 600,462 640,465 700,482 740,475 770,458 750,440 760,405 810,380 880,360 920,335 935,310 935,250 940,185 1000,160 1055,152";

const england =
  "440,25 395,65 388,97 340,97 270,88 243,92 235,120 205,125 195,160 140,195 100,235 45,265 45,290 80,280 105,308 120,285 165,245 250,250 290,280 320,240 325,200 380,190 440,215 450,225 500,205 545,215 580,195 640,200 740,190 775,205 865,165 915,140 920,90 860,92 800,68 850,60 868,25";
const wales = "305,25 320,50 360,63 400,50 430,25";
const east =
  "1055,152 1110,115 1150,93 1190,85 1165,65 1185,50 1230,45 1260,20 1300,-60 2300,-60 2300,1700 2147,1580 2120,1540 2110,1490 2085,1455 2040,1448 1960,1405 1900,1390 1860,1415 1820,1485 1790,1510 1735,1523 1600,1480 1500,1400 1400,900 1055,152";
const spain =
  "13,1550 50,1558 100,1565 165,1553 195,1555 210,1562 270,1590 285,1575 330,1580 385,1605 448,1600 600,1650 1142,1798 1155,1825 1130,1835 1145,1890 1100,1930 1050,1960 1000,1990 970,2020 900,2035 860,2053";
const corsica =
  "1995,1655 2010,1655 2018,1700 2030,1740 2038,1790 2035,1830 2020,1865 2025,1890 2010,1930 1998,1965 1975,1950 1945,1940 1940,1920 1925,1900 1935,1885 1915,1860 1925,1845 1900,1810 1900,1775 1925,1745 1970,1710 1990,1710 1995,1655";
const sardinia = "1955,2053 1980,2010 2010,1995 2050,2020 2065,2053";

const regions = [
  "935,285 970,290 1000,315 1060,325 1110,345 1150,350 1250,355",
  "920,340 950,370 955,410 948,515 1000,515 1060,530 1120,527 1150,555 1170,580 1165,625 1160,665 1210,710 1225,740 1325,735 1370,780 1415,805 1430,790 1430,770 1485,745 1450,710 1415,660 1360,610 1350,570 1355,500 1370,430 1400,435",
  "1690,520 1680,540 1620,530 1605,555 1650,575 1648,610 1630,625 1630,660 1615,710 1605,760 1600,790 1640,820",
  "1415,805 1425,860 1415,910 1405,935 1330,940 1260,900 1265,860 1280,745",
  "1405,935 1420,970 1425,1020 1425,1060 1480,1060 1515,1040",
  "1100,820 1095,840 1115,880 1110,960 1180,985 1200,975 1245,970 1245,920 1260,900",
  "1160,665 1110,670 1100,710 1130,730 1120,760 1110,780 1100,820",
  "1110,960 1050,1000 1015,1035 940,1045 870,1040 830,1070 830,1120 800,1170 740,1240 705,1260 650,1270 615,1230",
  "948,515 915,540 920,575 890,590 830,600 780,550 775,500 770,458",
  "540,600 550,630 590,625 630,635 700,630 725,655 760,640 790,670 830,695 850,650 830,600",
  "920,575 960,640 980,680 980,710 940,735 890,735 835,700 830,750 800,790 750,805 725,890 700,905 650,905 605,915 630,980 635,1035 570,1045",
  "590,625 590,720 570,765 540,755 460,780 455,800 400,815",
  "725,890 760,930 800,930 835,970 840,1010 870,1040",
  "1015,1035 1050,1090 1030,1150 1045,1220 1000,1280 985,1310 960,1315 895,1300 875,1250 880,1215 850,1180 800,1170",
  "895,1300 870,1360 840,1390 830,1430 800,1485 720,1490 665,1515 660,1565 690,1580 685,1620 645,1710",
  "1240,1020 1230,1070 1205,1090 1210,1150 1240,1210 1235,1235",
  "985,1310 1000,1375 1040,1375 1075,1325 1110,1370 1125,1440 1155,1470 1165,1515 1110,1540 1050,1580 1060,1610 970,1605 930,1615 940,1640",
  "1120,1245 1170,1230 1280,1240 1305,1260 1290,1310 1230,1345 1245,1400 1245,1420 1300,1440 1350,1435 1375,1440 1450,1460 1440,1415 1480,1390 1480,1360 1510,1340 1560,1310 1540,1270 1600,1275",
  "1345,1440 1360,1490 1340,1550 1285,1600",
  "1340,1020 1345,1060 1340,1100 1355,1125",
];

const departments = [
  "1005,165 1020,200 1050,230 1085,235 1110,245 1115,280 1120,325 1125,355 1122,410 1115,480 1125,527",
  "955,410 1010,415 1065,435 1120,410",
  "1258,360 1245,420 1240,470 1190,490 1185,540 1170,580",
  "1255,470 1300,490 1355,500",
  "1165,625 1215,635 1240,605 1275,600 1290,630 1320,632 1350,605",
  "1320,632 1345,680 1330,730",
  "1415,460 1445,470 1460,530 1455,640 1420,655",
  "1475,450 1480,520 1525,570 1580,600 1630,625",
  "1455,640 1490,660 1550,645 1600,640 1630,625",
  "1635,660 1690,695",
  "1485,745 1510,730 1550,740 1600,760",
  "1425,860 1465,870 1490,850 1560,820 1620,815",
  "1465,870 1475,910 1520,960 1510,1000",
  "1100,820 1190,830 1245,860 1265,860",
  "800,455 830,465 865,490 910,460 950,465",
  "780,550 700,568 640,570 630,575 630,630",
  "600,465 620,500 620,535 590,570 630,575",
  "725,655 700,700 670,770 570,765",
  "670,770 750,805",
  "270,572 278,665 255,680 275,740",
  "278,670 340,670 390,700 430,685 480,660 485,600",
  "430,685 455,720 455,775",
  "570,765 600,835 550,855 565,895 510,935 455,905",
  "565,895 605,915",
  "715,905 712,980 715,1070 700,1110",
  "800,790 850,800 865,860 890,885 850,930 838,970",
  "890,885 960,880 990,870 1000,820 1060,830 1100,820",
  "920,735 925,790 960,800 1000,820",
  "980,680 1030,680 1045,710 1100,705",
  "980,680 980,600 1010,590 1055,590 1050,640 1035,690",
  "1010,575 1020,550 1055,550 1055,595 1020,590 1010,575",
  "1025,575 1035,560 1045,575 1030,582",
  "915,540 970,530 1010,545 1055,550 1060,530",
  "960,880 995,920 1000,1035",
  "610,1060 660,1090 700,1110 740,1095 805,1090",
  "700,1115 690,1150 650,1155 670,1200 680,1240 705,1260",
  "900,1040 915,1080 960,1150 970,1175",
  "880,1215 970,1175 1040,1180",
  "705,1260 710,1330 740,1345 700,1400 695,1470 700,1490",
  "730,1360 800,1365 845,1390 850,1430 885,1455 950,1440 960,1410 1000,1375",
  "1155,1470 1240,1465 1245,1400",
  "540,1385 600,1405 650,1440 695,1460",
  "490,1575 600,1570 690,1575",
  "695,1580 720,1610 780,1625 840,1600 855,1560 810,1500",
  "780,1625 755,1660 775,1690 755,1740",
  "820,1535 890,1530 915,1505 960,1465 1020,1475 1050,1540 1110,1530",
  "915,1505 930,1560 970,1600 1050,1610 1110,1560",
  "805,1715 840,1660 900,1635 940,1640",
  "940,1640 960,1730 1020,1750",
  "935,1770 990,1750 1050,1720 1115,1710",
  "1060,1630 1100,1625 1145,1650",
  "1045,1105 1095,1070 1145,1105 1205,1115",
  "1235,1065 1290,1065 1300,1040 1355,1020",
  "1355,1040 1365,1020 1415,1020",
  "1290,1070 1280,1110 1290,1160 1340,1195 1395,1145 1355,1125",
  "1395,1145 1420,1140 1490,1220 1530,1220 1540,1270",
  "1480,1100 1490,1145 1465,1185",
  "1490,1145 1540,1160 1580,1130 1620,1145",
  "1050,1220 1120,1245 1150,1295 1155,1320 1110,1365",
  "1155,1320 1230,1345",
  "1305,1260 1350,1240 1365,1310 1340,1430",
  "1350,1240 1395,1250 1405,1290 1445,1295 1445,1350 1480,1355",
  "1480,1400 1500,1420 1560,1400 1600,1400 1640,1365",
  "1635,1410 1620,1455 1640,1500 1580,1540 1530,1535 1470,1540 1455,1500 1455,1460",
  "1360,1500 1400,1535 1480,1555 1485,1640",
  "1620,1540 1650,1575",
  "1165,1515 1210,1510 1260,1550 1285,1600",
  "1900,1785 1945,1795 1990,1840 2000,1875 2020,1870",
  "1350,1430 1370,1415 1385,1420 1380,1435",
];

const frontiers = [
  "1150,93 1160,115 1215,122 1250,95 1280,75 1330,72 1355,70 1375,100 1420,108 1450,130 1460,155 1430,185 1440,203 1470,203 1500,240 1525,280 1495,320 1460,345 1450,380 1465,435",
  "1495,320 1500,360 1540,385 1530,445",
  "1475,25 1495,75 1485,120 1465,155 1480,180 1470,203",
  "1698,800 1760,795 1810,790 1830,755 1870,765 1940,775 1965,795 2010,775 2030,800 2050,830 2070,775 2120,775 2147,800",
  "1965,795 1955,880 2000,885 2030,910 2060,890 2085,905 2147,920",
  "2080,905 2090,960 2040,965 2040,1020 2000,1030 1960,1020 1940,1005 1930,1050 1910,1110 1890,1110 1830,1050 1820,1020 1790,1040 1790,1060 1760,1110 1700,1110 1645,1120",
  "1810,790 1845,770 1865,775",
];

const meridians = ["32,25 15,500", "272,40 97,2030", "512,40 385,2030", "752,40 677,2030", "988,40 966,2030", "1230,40 1253,2030", "1468,40 1541,2030", "1705,40 1830,2030", "1947,60 2120,2030"];
const parallels = [
  "50,298 300,322 620,343 1000,355 1400,350 1800,325 2130,300",
  "50,680 600,725 1000,738 1500,730 2130,683",
  "50,1063 560,1105 1000,1118 1500,1110 2130,1065",
  "50,1450 560,1485 1000,1498 1500,1487 2130,1452",
  "50,1830 560,1860 1000,1880 1500,1875 2130,1835",
];

const lakes = [
  "1530,1060 1520,1045 1550,1022 1600,1012 1625,1022 1590,1028 1550,1040 1530,1060",
  "1880,742 1920,765 1970,790 1960,798 1900,770 1880,742",
  "1585,955 1600,935 1635,912 1625,930 1585,955",
  "1800,895 1820,888 1840,905 1835,915 1800,905",
  "1480,1150 1492,1160 1494,1175 1485,1165",
  "1525,1125 1540,1145 1532,1140",
  "1555,1395 1580,1385 1560,1403",
  "545,1160 575,1180 605,1215 610,1260 635,1290 628,1300 605,1280 595,1225 560,1185",
  "440,855 470,850 495,868 465,862",
  "1310,1590 1330,1580 1340,1600 1320,1608",
  "1385,1590 1400,1582 1418,1597 1400,1606",
  "538,1340 555,1355 535,1362",
  "1160,80 1200,70 1250,95 1200,98",
  "1240,60 1262,75 1250,110 1240,85",
  "1850,1120 1852,1085 1878,1062 1870,1090 1858,1140",
  "1918,1118 1940,1075 1950,1050 1945,1085 1955,1110",
  "2115,1150 2125,1120 2160,1105 2160,1175 2120,1170",
];

const degreeMarks: [number, number, string][] = [
  [275, 46, "6°"], [512, 46, "4°"], [752, 46, "2°"], [990, 46, "0°"], [1230, 46, "4°"], [1468, 46, "6°"], [1705, 46, "8°"], [1947, 46, "10°"],
  [97, 2046, "4°"], [387, 2046, "2°"], [677, 2046, "0°"], [966, 2046, "2°"], [1253, 2046, "4°"], [1541, 2046, "6°"], [1832, 2046, "8°"], [2122, 2046, "10°"],
  [34, 300, "50°"], [34, 685, "48°"], [34, 1069, "46°"], [34, 1452, "44°"], [34, 1835, "42°"],
  [2124, 308, "50°"], [2124, 690, "48°"], [2124, 1075, "46°"], [2124, 1459, "44°"], [2124, 1842, "42°"],
];

function FranceMap() {
  const land = "#dfdfdf";
  const shore = "#7fa9be";
  const france = rough(belgium, 0.25) + rough(southCoast).replace("M", "L") + rough(pyrenees, 0.25).replace("M", "L") + rough(atlantic).replace("M", "L") + "Z";
  return (
    <svg viewBox="13 25 2134 2028" className="aspect-[712/676] w-[712px] max-w-full border border-black" role="img" aria-label="Carte administrative de la France">
      <rect x="0" y="0" width="2160" height="2070" fill="#c5ebff" />
      <g fill={land} stroke={shore} strokeWidth="2.5">
        <path d={rough(england)} />
        <path d={rough(wales)} />
        <path d={rough(east, 0.1)} />
        <path d={rough(spain, 0.12) + "L13 2053Z"} />
        <path d={rough(sardinia)} />
        <path d="M562 203l20-8 28 8-18 25-15-8zM405 436l10-8 12 4-8 8zM455 476l26 6 0 10-26-4z" />
        <path d="M2105 1690l15-10 27-2v12l-30 8z" />
      </g>
      <path d={france} fill="#fffee6" stroke={shore} strokeWidth="2.5" />
      <path d={rough(corsica)} fill="#fffee6" stroke={shore} strokeWidth="2.5" />
      <g fill="#fffee6" stroke={shore} strokeWidth="2.5">
        <path d="M300 825l10-2 10 10-10 6zM422 905l6-6 10 14-6 4zM510 1055l25 4 2 8-22-4zM528 1095l14 6 10 20-12-8z" />
      </g>
      <g stroke="#000" strokeOpacity=".15" strokeWidth="2" fill="none">
        {meridians.concat(parallels).map((l) => (
          <polyline key={l} points={l} />
        ))}
      </g>
      <g fill="#c5ebff" stroke="#79b4d6" strokeWidth="3">
        {lakes.map((l) => (
          <path key={l} d={rough(l)} />
        ))}
      </g>
      <g fill="none" stroke="#77776c" strokeWidth="2.5" strokeDasharray="8 4">
        {departments.map((l) => (
          <path key={l} d={rough(l, 0.42)} />
        ))}
      </g>
      <g fill="none" stroke="#5c5c54" strokeWidth="3.4" strokeDasharray="11 4">
        {regions.map((l) => (
          <path key={l} d={rough(l, 0.42)} />
        ))}
      </g>
      <g fill="none" stroke="#585858" strokeWidth="7" strokeDasharray="30 6 7 6" strokeLinejoin="round">
        <path d={rough(belgium, 0.25)} />
        <path d={rough(pyrenees, 0.25)} />
        {frontiers.map((l) => (
          <path key={l} d={rough(l, 0.45)} />
        ))}
        <path d="M487 378l-2 45 4 20 22 35v30q0 34-22 32l-50-6" />
        <path d="M2005 1618l18 15 22 28M2064 1713l8 38M1975 1973l30 8 18-16" />
      </g>
      <circle cx="1476" cy="1095" r="8" fill="#f00808" />

      <g fontFamily="Open Sans, sans-serif" fontWeight="700" fontSize="16" textAnchor="middle" fill="#111">
        {degreeMarks.map(([x, y, t]) => (
          <text key={`${x}-${y}`} x={x} y={y}>{t}</text>
        ))}
      </g>

      <g>
        <rect x="68" y="1751" width="232" height="248" fill="#c5ebff" />
        <g fill="#cfcfcf" stroke="#8aa" strokeWidth="2">
          <path d={rough("90,1768 112,1765 115,1780 95,1782 90,1768")} />
          <path d={rough("160,1858 155,1815 175,1780 205,1755 240,1751 300,1751 300,1895 270,1905 245,1900 240,1925 225,1935 205,1915 190,1890 178,1890 205,1930 190,1940 160,1900 135,1920 120,1945 85,1950 75,1930 85,1908 118,1910 118,1880 145,1865 160,1858")} />
          <path d={rough("115,1870 130,1868 135,1850 120,1835 125,1815 112,1825 118,1845 115,1870")} />
          <path d={rough("97,1855 110,1850 108,1838 97,1845 97,1855")} />
          <path d={rough("72,1999 75,1965 155,1955 165,1985 200,1995 240,1990 240,1999")} />
          <path d={rough("245,1940 270,1925 300,1925 300,1950 250,1950")} />
        </g>
        <path d={rough("205,1760 185,1800 190,1855 200,1870 215,1850 228,1810 220,1770")} fill="#c5ebff" stroke="#8ab" strokeWidth="1.500" />
        <path d="M240 1900l8-14 20 4 18 10-10 12-28 0z" fill="#c5ebff" stroke="#8ab" strokeWidth="1.500" />
        <path d="M112 1880l20-8 20 12-3 38-28-4-2-26z" fill="#fffee6" />
        <g fill="none" stroke="#888" strokeWidth="1.800">
          <path d={rough("160,1900 190,1885 230,1890 250,1860 240,1820 215,1850 200,1875 160,1875")} />
          <path d={rough("190,1880 200,1920 240,1915 235,1880 300,1870")} />
          <path d={rough("205,1760 195,1790 175,1830M175,1830".split("M")[0])} />
          <path d={rough("160,1875 175,1895 200,1900 225,1870 245,1875 270,1840")} />
        </g>
        <rect x="68" y="1751" width="232" height="248" fill="none" stroke="#223" strokeWidth="4" />
      </g>

      <text x="327" y="1891" fontFamily="Open Sans, sans-serif" fontSize="35" fill="#000">http://www.CartesFrance.fr</text>
      <g>
        <path d="M330 1957h417v10H330z" fill="#fff" />
        <path d="M330 1961.500h417" stroke="#000" strokeWidth="3" />
        <path d="M418 1957.500h84M590 1957.500h84M330 1965h138M608 1965h138" stroke="#000" strokeWidth="7" />
      </g>
      <g fontFamily="Open Sans, sans-serif" fontWeight="700" fontSize="16" fill="#111">
        <text x="326" y="1949">0</text><text x="530" y="1949">(km)</text><text x="742" y="1949">250</text>
        <text x="326" y="1987">0</text><text x="533" y="1987">(mi)</text><text x="726" y="1987">150</text>
        <text x="402" y="2014" fontStyle="italic" fontWeight="600">Projection Lambert 93 - RGF 93 datum</text>
      </g>
    </svg>
  );
}

/* ------------------------------------------------------------------ */
/* Panels                                                              */
/* ------------------------------------------------------------------ */

function PanelHead({ title }: { title: string }) {
  return (
    <div className="flex h-[19px] shrink-0 items-center justify-between pr-0.5 pl-1">
      <h2>{title}</h2>
      <span className="flex gap-[3px]">
        <button type="button" aria-label={`Détacher ${title}`}>
          <svg width="11" height="11" aria-hidden="true">
            <rect x=".5" y=".5" width="10" height="10" rx="2" fill="#f4f4f4" stroke="#666" />
            <path d="M4.500 3.500h4v4M2.500 5.500h3v3h-3z" fill="none" stroke="#555" />
          </svg>
        </button>
        <button type="button" aria-label={`Fermer ${title}`}>
          <svg width="11" height="11" aria-hidden="true">
            <rect x=".5" y=".5" width="10" height="10" rx="2" fill="#f4f4f4" stroke="#666" />
            <path d="M3 3l5 5M8 3l-5 5" stroke="#444" strokeWidth="1.800" />
          </svg>
        </button>
      </span>
    </div>
  );
}

function Arrow({ up = false }: { up?: boolean }) {
  return (
    <svg width="8" height="4" aria-hidden="true">
      <path d={up ? "M0 4h8L4 0z" : "M0 0h8L4 4z"} fill="#555" />
    </svg>
  );
}

const tree: [string, string][] = [
  ["gpkg", "GeoPackage"], ["feather", "SpatiaLite"], ["elephant", "PostgreSQL"], ["hana", "SAP HANA"], ["stac", "STAC"],
  ["mssql", "MS SQL Server"], ["oracle", "Oracle"], ["wms", "WMS/WMTS"], ["cloud", "Nuage"], ["cube", "Scènes"],
  ["sensor", "SensorThings"], ["vtiles", "Tuiles vectorielles"],
];

function TreeRow({ icon, label, child, open, active }: { icon: string; label: string; child?: boolean; open?: boolean; active?: boolean }) {
  return (
    <li role="treeitem" aria-selected={!!active} className={`flex h-[18px] items-center ${active ? "w-[179px] bg-[#efefef]" : ""} ${child ? "pl-[35px]" : "pl-1"}`}>
      {!child && <span className="flex w-[15px] shrink-0">{open && <Arrow />}</span>}
      <Svg size="size-4">{icons[icon]}</Svg>
      <span className="pl-1.5 whitespace-nowrap">{label}</span>
    </li>
  );
}

function Explorer() {
  return (
    <section aria-label="Explorateur" className="flex h-[341px] shrink-0 flex-col">
      <PanelHead title="Explorateur" />
      <div className="flex h-[31px] shrink-0 items-center gap-[9px] pl-2">
        {["addSel", "refresh", "filter", "collapse", "infoOnly"].map((i) => (
          <button key={i} type="button" aria-label={i}>
            <Svg size="size-4">{icons[i]}</Svg>
          </button>
        ))}
      </div>
      <div className="flex min-h-0 grow border border-[#b5b5b5] bg-white">
        <ul role="tree" className="min-w-0 grow overflow-hidden pt-px">
          {tree.map(([i, l]) => (
            <TreeRow key={l} icon={i} label={l} />
          ))}
          <TreeRow icon="xyz" label="Tuiles XYZ" open />
          <TreeRow icon="xyz" label="Mapzen Global Terrain" child />
          <TreeRow icon="xyz" label="OpenStreetMap" child active />
          <TreeRow icon="wcs" label="WCS" />
        </ul>
        <div className="flex w-3.5 shrink-0 flex-col border-l border-[#b5b5b5]">
          <button type="button" aria-label="Défiler vers le haut" className="flex h-[13px] items-center justify-center"><Arrow up /></button>
          <span className="h-[58px] border-y border-[#b5b5b5] bg-[#e9e9e9]" />
          <span className="grow bg-white" />
          <span className="h-6 border-y border-[#b5b5b5] bg-[#e9e9e9]" />
          <button type="button" aria-label="Défiler vers le bas" className="flex h-[13px] items-center justify-center"><Arrow /></button>
        </div>
      </div>
    </section>
  );
}

function Layers() {
  const [shown, setShown] = useState(true);
  return (
    <section aria-label="Couches" className="flex min-h-0 grow flex-col">
      <PanelHead title="Couches" />
      <div className="flex h-[30px] shrink-0 items-center gap-[9px] pl-2">
        {["brush", "group", "eye", "filterDrop"].map((i) => (
          <button key={i} type="button" aria-label={i}><Svg size="size-4">{icons[i]}</Svg></button>
        ))}
        <button type="button" disabled aria-label="epsilon" className="flex items-center gap-1 opacity-60">
          <Svg size="size-4">{icons.epsilon}</Svg>
          <Arrow />
        </button>
        {["expand", "collapse", "removeLay"].map((i) => (
          <button key={i} type="button" aria-label={i}><Svg size="size-4">{icons[i]}</Svg></button>
        ))}
      </div>
      <div className="grow border border-[#b5b5b5] bg-white pt-px">
        <div className="flex h-[18px] items-center pl-1.5">
          <span className="flex w-[17px] shrink-0"><Arrow /></span>
          <label className="relative flex size-[13px] shrink-0">
            <input type="checkbox" checked={shown} onChange={() => setShown(!shown)} aria-label="Afficher carte-administrative-lambert-Villes" className="peer size-[13px] appearance-none border border-[#8d8d8d] bg-white" />
            <svg viewBox="0 0 13 13" className="pointer-events-none absolute inset-0 hidden peer-checked:block" aria-hidden="true">
              <path d="M3 6.500L5.500 10 10 2.500" fill="none" stroke="#000" strokeWidth="1.800" />
            </svg>
          </label>
          <svg viewBox="0 0 12 12" className="ml-2 size-[13px] shrink-0" aria-hidden="true">
            <path d="M0 0h12v12H0z" fill="#dfe8f2" />
            <path d="M0 0h3v3H0zM6 0h3v3H6zM3 3h3v3H3zM6 6h3v3H6zM0 9h3v3H0zM9 9h3v3H9z" fill="#26374a" />
            <path d="M3 0h3v3H3zM9 3h3v3H9zM0 6h3v3H0zM6 3h3v3H6z" fill="#7695b5" />
          </svg>
          <span className="ml-1 flex h-[18px] min-w-0 grow items-center justify-between border border-[#bfe0f5] bg-linear-to-b from-white to-[#eaf5fd] pl-0.5">
            <a href="#layer" className="font-bold whitespace-nowrap underline">carte-administrative-lambert-Villes</a>
            <span className="mr-1 flex size-4 shrink-0 items-center justify-center bg-[#e6e6e6] text-sm leading-4 font-bold text-[#555]">?</span>
          </span>
        </div>
        <ul>
          <li className="flex h-[18px] items-center gap-1.5 pl-[43px]"><span className="size-4 bg-[#ff0000]" />Bande 1 (Red)</li>
          <li className="flex h-[18px] items-center gap-1.5 pl-[43px]"><span className="size-4 bg-[#00ff00]" />Bande 2 (Green)</li>
          <li className="flex h-[18px] items-center gap-1.5 pl-[43px]"><span className="size-4 bg-[#0000ff]" />Bande 3 (Blue)</li>
        </ul>
      </div>
    </section>
  );
}

/* ------------------------------------------------------------------ */
/* Status bar                                                          */
/* ------------------------------------------------------------------ */

function Spin({ id, label, value }: { id: string; label: string; value: string }) {
  return (
    <>
      <label htmlFor={id} className="mr-[3px] ml-2">{label}</label>
      <span className="flex h-5 w-[84px] rounded-xs border border-[#a9a9a9] bg-white">
        <input id={id} defaultValue={value} className="w-0 min-w-0 grow pl-1 outline-none" />
        <span className="flex w-[13px] flex-col border-l border-[#b5b5b5] bg-[#f6f6f6]">
          <button type="button" aria-label={`${label} +`} className="flex grow items-center justify-center"><Arrow up /></button>
          <button type="button" aria-label={`${label} -`} className="flex grow items-center justify-center"><Arrow /></button>
        </span>
      </span>
    </>
  );
}

function StatusBar() {
  const [render, setRender] = useState(true);
  return (
    <footer className="flex h-7 shrink-0 items-center bg-[#efefef] pr-2 pl-1">
      <label className="flex h-[22px] w-[239px] items-center rounded-xs border border-[#a9a9a9] bg-white">
        <svg viewBox="0 0 16 16" className="ml-1.5 size-3.5" aria-hidden="true">
          <circle cx="7" cy="6" r="4.500" fill="none" stroke="#888" strokeWidth="1.300" />
          <path d="M10 9.500l4 5" stroke="#888" strokeWidth="1.800" />
        </svg>
        <input aria-label="Taper pour trouver" placeholder="Taper pour trouver (Ctrl+K)" className="w-0 grow pl-[7px] outline-none placeholder:text-[#7f7f7f]" />
      </label>
      <span className="ml-2 grow">1 entrée de légende supprimée.</span>
      <label htmlFor="coord" className="mr-[3px]">Coordonnée</label>
      <input id="coord" defaultValue="572  -749" className="h-[22px] w-[61px] rounded-xs border border-[#a9a9a9] bg-white pl-1.5 whitespace-pre outline-none" />
      <button type="button" aria-label="Suivi du curseur" className="mx-1">
        <svg viewBox="0 0 16 16" className="size-4" aria-hidden="true">
          <path d="M2 3l4-2 7 8-2 5-4 1-6-8z" fill="#ddd" stroke="#444" />
          <path d="M3 5l6 7M6 3l5 7M2 14L14 2M10 4l4 4" stroke="#333" strokeWidth="1.300" />
        </svg>
      </button>
      <label htmlFor="scale" className="mr-1 ml-2">Échelle</label>
      <span className="relative flex h-5 w-[81px] items-center rounded-xs border border-[#a9a9a9] bg-white">
        <select id="scale" defaultValue="1:5312" className="h-full w-full appearance-none pl-1 outline-none">
          <option>1:5312</option>
        </select>
        <span className="pointer-events-none absolute inset-y-0 right-0 flex w-5 items-center justify-center border-l border-[#b5b5b5] bg-[#f6f6f6]"><Arrow /></span>
      </span>
      <button type="button" aria-label="Verrouiller l'échelle" className="ml-3">
        <svg viewBox="0 0 12 15" className="h-[15px] w-3" aria-hidden="true">
          <path d="M3 7V4.500a3 3 0 0 1 6 0V7" fill="none" stroke="#555" strokeWidth="1.600" />
          <rect x=".5" y="6.500" width="11" height="8" rx="1" fill="#555" />
        </svg>
      </button>
      <Spin id="zoom" label="Loupe" value="100%" />
      <Spin id="rotation" label="Rotation" value="0,0 °" />
      <label className="relative ml-1.5 flex items-center gap-[5px]">
        <input type="checkbox" checked={render} onChange={() => setRender(!render)} className="peer size-[13px] appearance-none border border-[#8d8d8d] bg-white" />
        <svg viewBox="0 0 13 13" className="pointer-events-none absolute left-0 hidden size-[13px] peer-checked:block" aria-hidden="true">
          <path d="M3 6.500L5.500 10 10 2.500" fill="none" stroke="#000" strokeWidth="1.800" />
        </svg>
        Rendu
      </label>
      <button type="button" className="ml-4 flex items-center gap-0.5">
        <svg viewBox="0 0 14 14" className="size-[13px]" aria-hidden="true">
          <g fill="none" stroke="#666" strokeWidth="1.200">
            <circle cx="7" cy="7" r="6" /><ellipse cx="7" cy="7" rx="3" ry="6" /><path d="M1 7h12M7 1v12M2 4h10M2 10h10" />
          </g>
        </svg>
        EPSG:3857
      </button>
      <button type="button" aria-label="Messages" className="ml-5">
        <svg viewBox="0 0 16 15" className="h-[15px] w-4" aria-hidden="true">
          <path d="M8 .5c4.500 0 7.500 2.500 7.500 5.500S12.500 11 8 11l-1-.2L5 14l-.5-3.500C2 9.800.5 8 .5 6 .5 3 3.500.5 8 .5z" fill="#555" />
          <path d="M3.500 6h9" stroke="#fff" strokeWidth="2" strokeDasharray="2 1.500" />
        </svg>
      </button>
    </footer>
  );
}

/* ------------------------------------------------------------------ */
/* Task bar                                                            */
/* ------------------------------------------------------------------ */

function Logo({ size }: { size: string }) {
  return (
    <Svg size={size}>
      <circle cx="11" cy="11" r="8.500" stroke="#6ba52b" strokeWidth="4.500" />
      <path d="M14 14l7 8.500" stroke="#8cc63f" strokeWidth="5" />
      <path d="M10.500 9.500l6 2-3 1 2 3.500-2 1-2-3.500-1.500 2z" fill="#ee7913" />
    </Svg>
  );
}

function TaskBar() {
  return (
    <nav aria-label="Barre des tâches" className="flex h-10 shrink-0 bg-[linear-gradient(90deg,#451d1f_0,#451d1f_21%,#4a4744_25%,#4a4744_71%,#451f21_76%)] font-[Open_Sans,Noto_Sans,sans-serif] text-xs text-white">
      <button type="button" aria-label="Démarrer" className="flex w-12 shrink-0 items-center justify-center">
        <svg viewBox="0 0 16 16" className="size-4" aria-hidden="true"><path d="M0 2.200l7-1v6.300H0zM8 1.100L16 0v7.500H8zM0 8.500h7v6.300l-7-1zM8 8.500h8V16l-8-1.100z" fill="#fff" /></svg>
      </button>
      <label className="flex w-[288px] shrink-0 items-center border border-[#bdbdbd] bg-[#f1f1f1] text-[#333]">
        <svg viewBox="0 0 18 18" className="ml-3 size-[17px]" aria-hidden="true">
          <circle cx="11" cy="6.500" r="5.500" fill="none" stroke="#222" strokeWidth="1.300" />
          <path d="M7.500 11L1.500 17" stroke="#222" strokeWidth="1.300" />
        </svg>
        <input aria-label="Recherche Windows" placeholder="Taper ici pour rechercher" className="w-0 grow pl-2.5 text-sm outline-none placeholder:text-[#444]" />
      </label>
      <button type="button" aria-label="Vue des tâches" className="flex w-12 items-center justify-center">
        <svg viewBox="0 0 17 16" className="h-4 w-[17px]" aria-hidden="true" fill="none" stroke="#fff" strokeWidth="1.200">
          <rect x="1.500" y="4.500" width="9" height="7" /><path d="M1.500 0v2h9V0M1.500 16v-2h9v2M14.500 0v4M14.500 9v7" /><rect x="13.500" y="5.500" width="2" height="2" fill="#fff" />
        </svg>
      </button>
      <button type="button" aria-label="Explorateur de fichiers" className="ml-0.5 flex w-[49px] items-center justify-center">
        <Svg><path d="M1.500 20V4h8l1.500 2h11v14z" fill="#e8a33d" /><path d="M1.500 8h21v12.500h-21z" fill="#ffd86b" /><path d="M5.500 22v-8h13v8h-3.500v-3.500H9V22z" fill="#3d93dd" /></Svg>
      </button>
      <button type="button" aria-label="TeamViewer" className="flex w-[49px] items-center justify-center">
        <Svg><rect width="24" height="24" fill="#0e6fd6" /><circle cx="12" cy="12" r="10" fill="#fff" /><path d="M2.500 12L8 8v2.500h8V8l5.500 4-5.500 4v-2.500H8V16z" fill="#0e6fd6" /></Svg>
      </button>
      <button type="button" aria-label="Pellicule" className="flex w-[49px] items-center justify-center">
        <span className="flex h-6 w-[22px] flex-col border-2 border-y-[3px] border-black bg-[linear-gradient(115deg,#3b3bff_10%,#19c64d_40%,#f5e620_60%,#f02020_90%)]" />
      </button>
      <button type="button" aria-label="LibreOffice" className="flex w-[49px] items-center justify-center">
        <Svg><path d="M3 1h10l8 9v13H3z" fill="#f2f2f2" stroke="#c4c4c4" /><path d="M13 1l8 9h-5.500z" fill="#c9c9c9" /><path d="M13 1h5l3 3v6z" fill="#7c7c7c" /></Svg>
      </button>
      <button type="button" className="ml-1 flex w-[152px] shrink-0 items-center gap-[5px] border-b-2 border-[#76b9ed] pl-1.5">
        <Svg size="size-[22px]"><path d="M1 2h20v20H1z" fill="#e8f3e6" /><path d="M1 2h14v20H1z" fill="#2e8b3d" /><path d="M4 6l8 12M12 6L4 18" stroke="#fff" strokeWidth="2.500" /><path d="M12 11h11v12H14z" fill="#fff" stroke="#2e8b3d" /><path d="M14 14h8M14 17h8M14 20h8" stroke="#2e8b3d" /></Svg>
        <span className="whitespace-nowrap">Microsoft Excel Sta...</span>
      </button>
      <button type="button" aria-label="Firefox" className="ml-1 flex w-[49px] items-center justify-center">
        <Svg><path d="M14 1c4 3 9 7 9 13a11 10 0 0 1-22 0c0-4 1-7 3-9l2 3 3-1c0-2 1-4 5-6z" fill="#ff8a1f" /><path d="M14 1c2 3 8 6 7 13-1 4-3 5-5 6 2-6-1-9-5-10 0-3 1-6 3-9z" fill="#ffd43a" /><path d="M3 12c0 7 5 11 10 11 4 0 8-2 9-6-3 4-6 4-9 3z" fill="#e8255f" /><circle cx="11.500" cy="13" r="5" fill="#7a3fd0" /><path d="M5 8c3-1 5 0 7 2-2 0-3 2-5 2z" fill="#ffb62e" /></Svg>
      </button>
      <button type="button" aria-label="Word" className="flex w-12 items-center justify-center">
        <Svg size="size-[22px]"><path d="M2 1h20v21H2z" fill="#fff" stroke="#9cb6da" /><path d="M1 3l16-1v16L1 17z" fill="#2a5caa" /><path d="M3.500 6l2.500 8 3-7.500L12 14l3-8" stroke="#fff" strokeWidth="2" /><path d="M18 7h3M18 10h3M18 13h3M4 20h17" stroke="#6e95cc" /></Svg>
      </button>
      <button type="button" className="ml-1.5 flex w-[152px] shrink-0 items-center gap-1 border-b-2 border-[#76b9ed] pl-1.5">
        <Svg><circle cx="12" cy="12" r="11" fill="#fbc116" /><path d="M12 12L2.500 6.500A11 11 0 0 1 21.500 6.500z" fill="#e33b2e" /><path d="M12 12L2.500 6.500A11 11 0 0 0 11 23l5-8.500z" fill="#22a152" /><circle cx="12" cy="12" r="5.300" fill="#fff" /><circle cx="12" cy="12" r="4.200" fill="#2f7de1" /></Svg>
        <span className="whitespace-nowrap">~ (2650×1556) - Go...</span>
      </button>
      <button type="button" className="ml-1 flex w-40 shrink-0 items-center gap-[5px] border-b-2 border-[#76b9ed] bg-[#6f6d6b] pl-2">
        <Logo size="size-6" />
        <span className="whitespace-nowrap">*Projet sans titre —...</span>
      </button>
      <div className="flex grow items-center justify-end gap-2">
        <Svg size="size-4"><path d="M1 2l10-1 10 1v9c0 5-4 8-10 11C5 19 1 16 1 11z" fill="#fff" /><path d="M11 2v18M2 10h18" stroke="#222" strokeWidth="2" /><circle cx="18" cy="17" r="6" fill="#19a05a" /><path d="M15 17l2.500 2.500L21 15" stroke="#fff" strokeWidth="1.800" /></Svg>
        <Svg size="size-4"><path d="M22 6C18-1 6 1 5 12s9 14 18 7l-3-5c-4 4-9 1-9-3s5-6 8-2z" fill="#d8452a" /><path d="M12 7L4 14l-3 6 7 2 3-5 5-6z" fill="#6fb3e6" /><path d="M1 20l5-5 4 3-2 5z" fill="#f4e3a1" /></Svg>
        <Svg size="size-4"><path d="M4 4l5 3M19 3l-4 5M3 20l6-5M21 20l-6-4" stroke="#e2162a" strokeWidth="3.500" /><path d="M6 7l4-1 3-1 3 2 3-1-1 5 2 3-3 2-2 3-4-1-4 1-1-5-2-3z" fill="#e2162a" /></Svg>
        <Svg size="size-4"><g stroke="#fff" strokeWidth="1.700"><rect x="4" y="7" width="12" height="10" rx="1.500" /><path d="M16 11l4-2v6l-4-2M6 4c3-3 8-3 11 0M6 20c3 3 8 3 11 0" /></g></Svg>
        <Svg size="size-4"><rect x="1" y="1" width="22" height="21" fill="#31429a" stroke="#fff" strokeWidth="1.500" /><rect x="3" y="3" width="18" height="13" fill="#a9acb5" /><path d="M14 19h6" stroke="#fff" strokeWidth="3" /></Svg>
        <Svg size="size-4"><rect x="7" y="8" width="15" height="9" stroke="#fff" strokeWidth="1.600" /><path d="M9 10h11v5H9z" fill="#fff" /><path d="M1 5h7v4H6v9M3 2v3M6 2v3" stroke="#fff" strokeWidth="1.500" /></Svg>
        <Svg size="size-4"><path d="M2 9h4l5-5v16l-5-5H2zM14 9c1.500 2 1.500 4 0 6M17 6c3 4 3 8 0 12M20 4c4 5 4 11 0 16" stroke="#fff" strokeWidth="1.500" /></Svg>
        <Svg size="size-4"><g stroke="#ddd" strokeWidth="1.700"><path d="M3 22C3 12 10 5 21 4M8 22c0-7 5-12 13-13M13 22c0-4 3-7 8-8" /><circle cx="19" cy="20" r="1.800" fill="#fff" /></g></Svg>
      </div>
      <div className="ml-2 flex w-[58px] flex-col items-center justify-center text-[11px] leading-[18px]">
        <time>20:24</time>
        <time>01/04/2025</time>
      </div>
      <button type="button" aria-label="Notifications" className="relative ml-3 flex w-[38px] items-center justify-start pl-1">
        <svg viewBox="0 0 18 18" className="size-[18px]" aria-hidden="true"><path d="M1 1h16v12H9l-4 4v-4H1z" fill="#fff" /><path d="M4 5h10M4 8.500h8" stroke="#451f21" strokeWidth="1.400" /></svg>
        <span className="absolute top-[19px] left-3 flex size-4 items-center justify-center rounded-full border border-[#ddd] bg-[#333] text-[11px]">1</span>
      </button>
      <span className="ml-[3px] w-1.5 shrink-0 border-l border-[#8a7374]" />
    </nav>
  );
}

/* ------------------------------------------------------------------ */
/* Window                                                              */
/* ------------------------------------------------------------------ */

export default function App() {
  return (
    <div className="flex h-screen flex-col overflow-hidden bg-[#efefef] font-[Open_Sans,Noto_Sans,sans-serif] text-[11px] text-black">
      <header className="flex h-[23px] shrink-0 items-center justify-between bg-white pl-0.5">
        <h1 className="flex items-center gap-[5px]"><Logo size="size-4" />*Projet sans titre — QGIS</h1>
        <div className="flex">
          {["M0 5.500h11", "M.5 3.500h7v7h-7zM3 3V.500h7.500v7H8", "M.5.500l10 10M10.500.500l-10 10"].map((d, i) => (
            <button key={d} type="button" aria-label={["Réduire", "Restaurer", "Fermer"][i]} className="flex h-5 w-[45px] items-center justify-center">
              <svg width="11" height="11" aria-hidden="true"><path d={d} fill="none" stroke="#111" /></svg>
            </button>
          ))}
          <span className="w-[3px]" />
        </div>
      </header>
      <nav aria-label="Menu" className="flex h-5 shrink-0 items-center gap-3.5 border-b border-[#d5d5d5] pl-2.5">
        {menus.map(([a, b, c]) => (
          <button key={a + b + c} type="button" className="shrink-0 whitespace-nowrap">
            {a}<span className="underline underline-offset-2">{b}</span>{c}
          </button>
        ))}
      </nav>
      <ToolRow name="Projet et navigation" items={row1} />
      <ToolRow name="Couches et édition" items={row2} />
      <main className="flex min-h-0 grow">
        <aside className="flex w-[294px] shrink-0 flex-col">
          <Explorer />
          <span className="flex h-1.5 shrink-0 items-center justify-center">
            <svg width="17" height="2" aria-hidden="true"><path d="M0 1h17" stroke="#aaa" strokeWidth="2" strokeDasharray="1 2" /></svg>
          </span>
          <Layers />
        </aside>
        <div className="ml-1.5 flex min-w-0 grow items-center justify-center border border-[#b5b5b5] bg-white">
          <FranceMap />
        </div>
      </main>
      <StatusBar />
      <TaskBar />
    </div>
  );
}
